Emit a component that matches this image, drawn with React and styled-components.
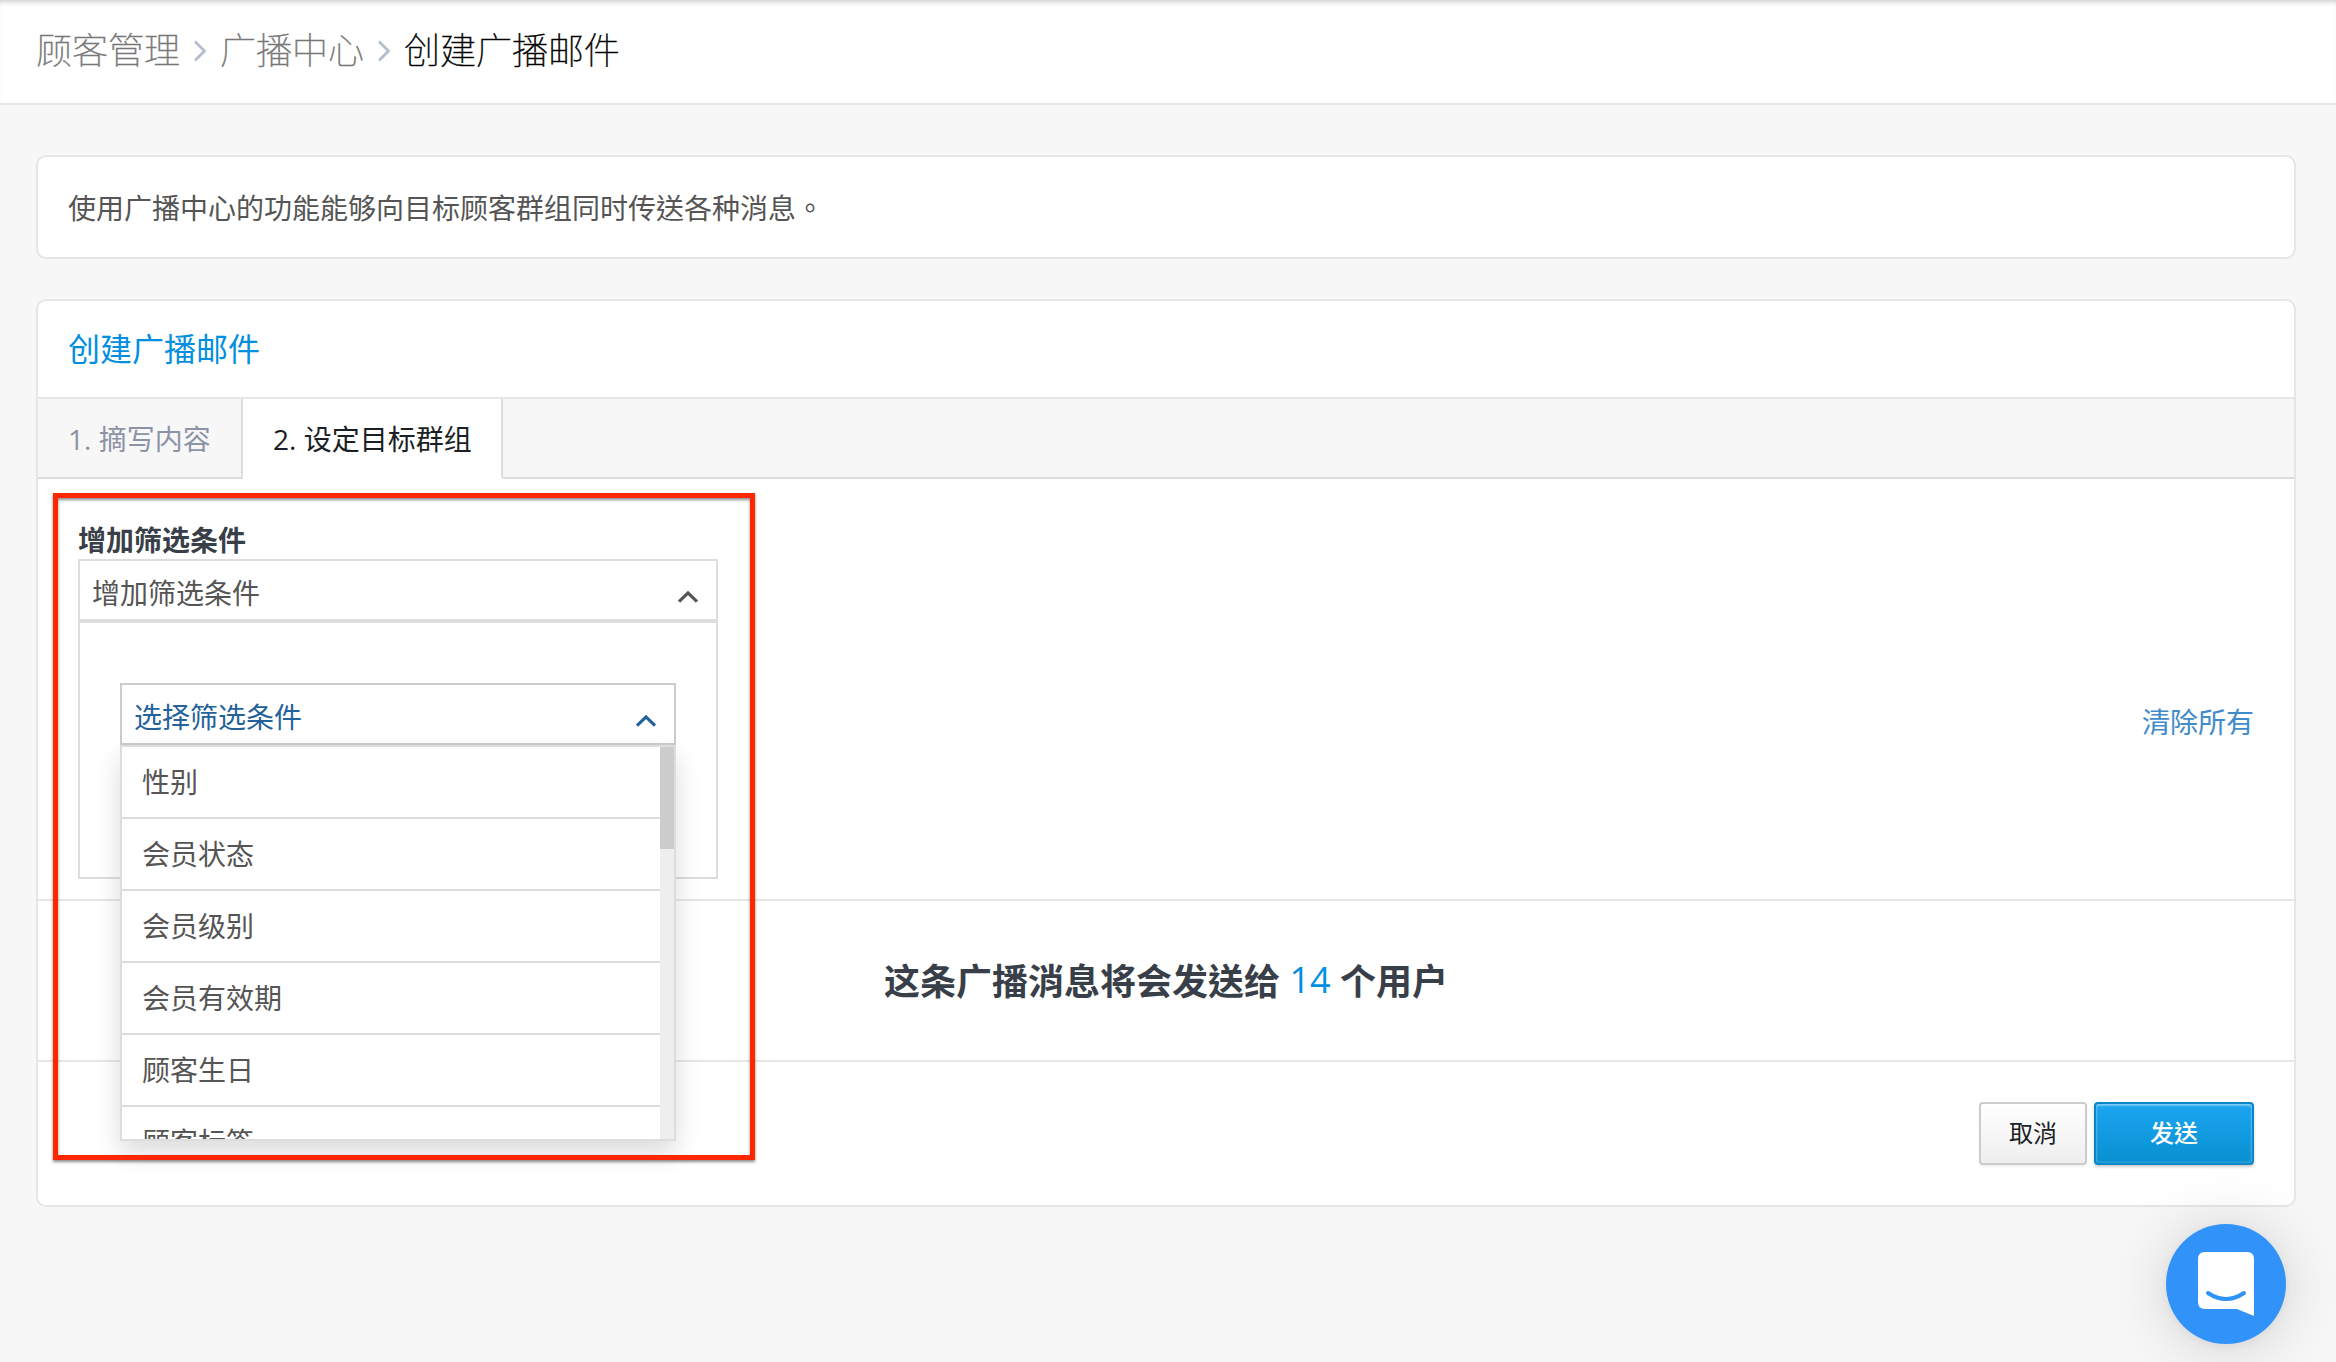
import React, { useState } from 'react';
import styled, { createGlobalStyle } from 'styled-components';

const GlobalStyle = createGlobalStyle`
  * {
    box-sizing: border-box;
  }

  body {
    margin: 0;
    background: #f7f7f7;
    color: #555555;
    font-family: 'Open Sans', 'Noto Sans CJK TC', sans-serif;
    font-size: 28px;
    overflow: hidden;
  }
`;

const AppWrapper = styled.div`
  height: 1362px;
  overflow: hidden;
`;

const Header = styled.header`
  display: flex;
  align-items: center;
  height: 105px;
  padding: 0 36px 2px;
  background: #ffffff;
  border-bottom: 2px solid #e6e6e6;
  box-shadow: inset 0 5px 5px -3px rgba(0, 0, 0, 0.2);
  font-size: 36px;
  font-weight: 100;
  line-height: 52px;
  -webkit-text-stroke: 0.5px;

  svg {
    margin: 0 12px 0 13px;
  }
`;

const Crumb = styled.span`
  color: ${(props) => (props.$current ? '#000000' : '#777777')};
`;

const Content = styled.main`
  display: flex;
  flex-flow: column;
  gap: 40px;
  padding: 50px 40px 0 36px;
`;

const Card = styled.section`
  background: #ffffff;
  border: 2px solid #e6e6e6;
  border-radius: 10px;
`;

const Notice = styled(Card)`
  display: flex;
  align-items: center;
  height: 104px;
  padding: 0 30px;
`;

const CardTitle = styled.div`
  display: flex;
  align-items: center;
  height: 98px;
  padding: 0 30px 4px;
  border-bottom: 2px solid #e6e6e6;
  color: #038fe0;
  font-size: 32px;
`;

const Tabs = styled.div`
  display: flex;
  height: 80px;
  background: #f7f7f7;

  &::after {
    content: '';
    flex: 1;
    border-bottom: 2px solid #dddddd;
  }
`;

const Tab = styled.div`
  display: flex;
  align-items: center;
  width: ${(props) => props.$width}px;
  padding: 0 0 0 30px;
  white-space: nowrap;
  border-right: 2px solid #dddddd;
  border-bottom: 2px solid ${(props) => (props.$active ? '#ffffff' : '#dddddd')};
  background: ${(props) => (props.$active ? '#ffffff' : 'transparent')};
  color: ${(props) => (props.$active ? '#1c1f26' : '#8d93a6')};
`;

const Filters = styled.div`
  position: relative;
  display: flex;
  align-items: center;
  justify-content: space-between;
  height: 422px;
  padding: 0 40px;
  border-bottom: 2px solid #e6e6e6;
`;

const FilterGroup = styled.div`
  align-self: flex-start;
  width: 640px;
  padding-top: 40px;
`;

const Label = styled.div`
  height: 40px;
  line-height: 42px;
  color: #393f49;
  font-weight: 700;
`;

const Select = styled.div`
  display: flex;
  align-items: center;
  justify-content: space-between;
  height: 62px;
  padding: 4px 17px 0 12px;
  background: #ffffff;
  border: 2px solid ${(props) => (props.$focused ? '#cccccc' : '#dddddd')};
  color: ${(props) => (props.$focused ? '#23629a' : '#555555')};
  cursor: pointer;

  svg {
    margin-top: 9px;
  }
`;

const Panel = styled.div`
  height: 258px;
  padding: 60px 40px 0;
  border: 2px solid #dddddd;
`;

const Picker = styled.div`
  position: relative;
`;

const Menu = styled.div`
  position: absolute;
  z-index: 1;
  top: 100%;
  left: 0;
  display: flex;
  width: 100%;
  height: 396px;
  overflow: hidden;
  background: #ffffff;
  border: 2px solid #dddddd;
  box-shadow: 0 12px 24px rgba(0, 0, 0, 0.14);
`;

const Options = styled.div`
  flex: 1;
`;

const Option = styled.div`
  display: flex;
  align-items: center;
  height: 72px;
  padding: 0 20px 3px;
  border-bottom: 2px solid #dddddd;
`;

const Scrollbar = styled.div`
  width: 14px;
  background: #eeeeee;
`;

const Thumb = styled.div`
  height: 102px;
  background: #cccccc;
`;

// red frame drawn over the filter form
const Highlight = styled.div`
  position: absolute;
  z-index: 2;
  top: 14px;
  left: 15px;
  width: 702px;
  height: 667px;
  border: 5px solid #ff2600;
  filter: drop-shadow(0 2px 1.5px rgba(0, 0, 0, 0.45));
  pointer-events: none;
`;

const ClearLink = styled.a`
  margin-top: 64px;
  color: #428bca;
`;

const Summary = styled.div`
  display: flex;
  align-items: center;
  justify-content: center;
  height: 161px;
  padding-bottom: 2px;
  border-bottom: 2px solid #e6e6e6;
  color: #393f49;
  font-size: 36px;
  font-weight: 600;
  white-space: pre;

  span {
    color: #038fe0;
    font-weight: 400;
  }
`;

const Footer = styled.div`
  display: flex;
  justify-content: flex-end;
  gap: 7px;
  height: 143px;
  padding: 40px 40px 0;
`;

const Button = styled.button`
  width: ${(props) => (props.$primary ? 160 : 108)}px;
  height: 63px;
  padding: 0 0 4px;
  border: 2px solid ${(props) => (props.$primary ? '#0a85c7' : '#cccccc')};
  border-radius: 4px;
  background: ${(props) =>
    props.$primary
      ? 'linear-gradient(#1ca5f2, #0890d0)'
      : 'linear-gradient(#ffffff, #eeeeee)'};
  box-shadow: ${(props) =>
    props.$primary
      ? 'inset 0 2px 2px rgba(255, 255, 255, 0.35), inset 0 0 2px 1px rgba(255, 255, 255, 0.2), 0 2px 3px rgba(0, 0, 0, 0.2)'
      : '0 2px 2px rgba(0, 0, 0, 0.05)'};
  color: ${(props) => (props.$primary ? '#ffffff' : '#1c1f26')};
  font-family: inherit;
  font-size: 24px;
  font-weight: ${(props) => (props.$primary ? 500 : 400)};
  cursor: pointer;
`;

const Launcher = styled.div`
  position: fixed;
  right: 50px;
  bottom: 18px;
  display: flex;
  align-items: center;
  justify-content: center;
  width: 120px;
  height: 120px;
  border-radius: 50%;
  background: #3192fa;
  box-shadow: 0 2px 12px rgba(0, 0, 0, 0.06), 0 4px 64px rgba(0, 0, 0, 0.16);
`;

const options = [
  '性别',
  '会员状态',
  '会员级别',
  '会员有效期',
  '顾客生日',
  '顾客标签',
];

const Separator = () => (
  <svg width="15" height="24" viewBox="0 0 15 24" fill="none">
    <path d="M2 2.5 L11.5 12 L2 21.5" stroke="#b4bdce" strokeWidth="2.8" />
  </svg>
);

const Caret = () => (
  <svg width="22" height="14" viewBox="0 0 22 14" fill="none">
    <path
      d="M2 11.7 L11 2.9 L20 11.7"
      stroke="currentColor"
      strokeWidth="3.2"
    />
  </svg>
);

function App() {
  const [open, setOpen] = useState(true);

  return (
    <AppWrapper>
      <GlobalStyle />
      <Header>
        <Crumb>顾客管理</Crumb>
        <Separator />
        <Crumb>广播中心</Crumb>
        <Separator />
        <Crumb $current>创建广播邮件</Crumb>
      </Header>
      <Content>
        <Notice>使用广播中心的功能能够向目标顾客群组同时传送各种消息。</Notice>
        <Card>
          <CardTitle>创建广播邮件</CardTitle>
          <Tabs>
            <Tab $width={205}>1. 摘写内容</Tab>
            <Tab $width={260} $active>
              2. 设定目标群组
            </Tab>
          </Tabs>
          <Filters>
            <FilterGroup>
              <Label>增加筛选条件</Label>
              <Select>
                增加筛选条件
                <Caret />
              </Select>
              <Panel>
                <Picker>
                  <Select $focused onClick={() => setOpen(!open)}>
                    选择筛选条件
                    <Caret />
                  </Select>
                  {open && (
                    <Menu>
                      <Options>
                        {options.map((option) => (
                          <Option key={option}>{option}</Option>
                        ))}
                      </Options>
                      <Scrollbar>
                        <Thumb />
                      </Scrollbar>
                    </Menu>
                  )}
                </Picker>
              </Panel>
            </FilterGroup>
            <ClearLink>清除所有</ClearLink>
            <Highlight />
          </Filters>
          <Summary>
            这条广播消息将会发送给 <span>14</span> 个用户
          </Summary>
          <Footer>
            <Button>取消</Button>
            <Button $primary>发送</Button>
          </Footer>
        </Card>
      </Content>
      <Launcher>
        <svg width="56" height="64" viewBox="0 0 56 64" fill="none">
          <path
            d="M7 0 H49 Q56 0 56 7 V64 L39 57 H7 Q0 57 0 50 V7 Q0 0 7 0 Z"
            fill="#ffffff"
          />
          <path
            d="M10 41 Q28 53 46 41"
            stroke="#3192fa"
            strokeWidth="4"
            strokeLinecap="round"
          />
        </svg>
      </Launcher>
    </AppWrapper>
  );
}

export default App;
